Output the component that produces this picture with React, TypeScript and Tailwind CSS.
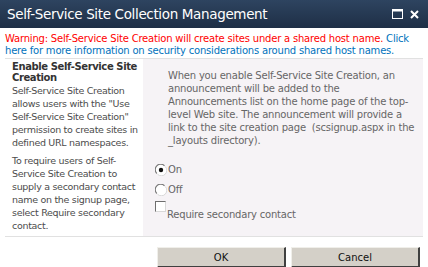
function Radio({ checked }: { checked?: boolean }) {
  return (
    <svg width="12" height="12" viewBox="0 0 12 12" className="shrink-0">
      <circle cx="6" cy="6" r="5.5" fill="#fff" />
      <path d="M1.8 9.5 A5 5 0 0 1 9.5 1.8" fill="none" stroke="#7a7a7a" strokeWidth="1.2" />
      <path d="M2.5 10.2 A5 5 0 0 0 10.2 2.5" fill="none" stroke="#d8d8d8" strokeWidth="1" />
      {checked && <circle cx="6" cy="6" r="2.2" fill="#111" />}
    </svg>
  );
}

export default function App() {
  return (
    <div className="flex h-[267px] w-[428px] flex-col overflow-hidden bg-white font-['DejaVu_Sans',sans-serif]">
      {/* TITLE BAR */}
      <div className="flex h-[28px] shrink-0 items-center justify-between bg-gradient-to-b from-[#2e4460] to-[#1e2f46] pl-[7px] pr-[9px]">
        <span className="text-[13.5px] tracking-[-0.35px] text-white">Self-Service Site Collection Management</span>
        <div className="flex items-center gap-[7px]">
          <svg width="11" height="10" viewBox="0 0 11 10">
            <rect x="0.5" y="0.5" width="10" height="9" fill="none" stroke="#fff" />
            <rect x="0.5" y="0.5" width="10" height="2" fill="#fff" />
          </svg>
          <svg width="9" height="9" viewBox="0 0 9 9">
            <path d="M1 1 L8 8 M8 1 L1 8" stroke="#fff" strokeWidth="2" />
          </svg>
        </div>
      </div>

      {/* WARNING */}
      <p className="mt-[5px] px-[5px] text-[10px] leading-[12px] tracking-[-0.2px]">
        <span className="text-[#ff0000]">Warning: Self-Service Site Creation will create sites under a shared host name.</span>{" "}
        <span className="text-[#0072bc]">Click here for more information on security considerations around shared host names.</span>
      </p>

      {/* SECTION */}
      <div className="mx-[5px] mt-[1px] flex h-[179px] shrink-0 border-y border-[#e1e1e1]">
        <div className="w-[138px] shrink-0 pl-[7px] pr-[1px] text-[9.5px] leading-[13px] tracking-[-0.3px] text-[#4c4c4c]">
          <h3 className="pt-[2px] text-[10px] font-semibold leading-[11px] tracking-[-0.4px] text-[#333]">Enable Self-Service Site Creation</h3>
          <p className="mt-[1px]">
            Self-Service Site Creation allows users with the "Use Self-Service Site Creation" permission to create sites in defined URL namespaces.
          </p>
          <p className="mt-[5px]">
            To require users of Self-Service Site Creation to supply a secondary contact name on the signup page, select Require secondary contact.
          </p>
        </div>
        <div className="flex-1 bg-[#f6f3f6] pt-[10px] text-[10px] leading-[13px] tracking-[-0.2px] text-[#666]">
          <p className="pl-[25px] pr-[4px]">
            When you enable Self-Service Site Creation, an announcement will be added to the Announcements list on the home page of the top-level Web site. The announcement will provide a link to the site creation page&nbsp; (scsignup.aspx in the _layouts directory).
          </p>
          <div className="mt-[16px] flex flex-col pl-[12px]">
            <label className="flex h-[13px] items-center gap-[1px]">
              <Radio checked />
              <span>On</span>
            </label>
            <label className="mt-[7px] flex h-[13px] items-center gap-[1px]">
              <Radio />
              <span>Off</span>
            </label>
            <label className="mt-[4px] flex items-start gap-[1px]">
              <span className="mt-[1px] h-[11px] w-[11px] shrink-0 border border-b-[#d8d8d8] border-l-[#6e6e6e] border-r-[#d8d8d8] border-t-[#6e6e6e] bg-white" />
              <span className="pt-[8px]">Require secondary contact</span>
            </label>
          </div>
        </div>
      </div>

      {/* BUTTONS */}
      <div className="mt-[10px] flex justify-end gap-[5px] pr-[8px]">
        <button className="h-[21px] w-[129px] border-b-2 border-l border-r-2 border-t border-b-[#404040] border-l-[#f0efea] border-r-[#404040] border-t-[#f0efea] bg-[#d4d0c8] text-[10px] text-[#111]">OK</button>
        <button className="h-[21px] w-[129px] border-b-2 border-l border-r-2 border-t border-b-[#404040] border-l-[#f0efea] border-r-[#404040] border-t-[#f0efea] bg-[#d4d0c8] text-[10px] text-[#111]">Cancel</button>
      </div>
    </div>
  );
}
